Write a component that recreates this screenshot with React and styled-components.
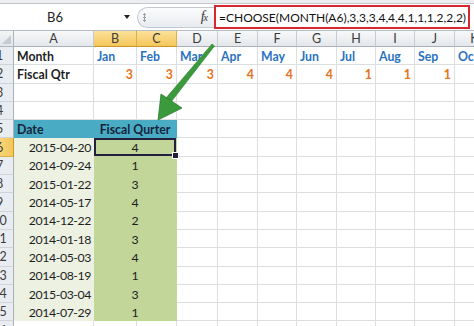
import React from 'react'
import styled, { createGlobalStyle } from 'styled-components'

const GlobalStyle = createGlobalStyle`
  body {
    margin: 0;
    background: #fff;
    font-family: Lato, "Liberation Sans", sans-serif;
    overflow: hidden;
  }
`

const COLS = [28, 80, 43, 40, 41, 40, 39, 40, 39, 39, 40, 40]
const LETTERS = ['A', 'B', 'C', 'D', 'E', 'F', 'G', 'H', 'I', 'J', 'K']
const MONTHS = ['Jan', 'Feb', 'Mar', 'Apr', 'May', 'Jun', 'Jul', 'Aug', 'Sep', 'Oct']
const QTRS = [3, 3, 3, 4, 4, 4, 1, 1, 1]
const DATA = [
  ['2015-04-20', 4],
  ['2014-09-24', 1],
  ['2015-01-22', 3],
  ['2014-05-17', 4],
  ['2014-12-22', 2],
  ['2014-01-18', 3],
  ['2014-05-03', 4],
  ['2014-08-19', 1],
  ['2015-03-04', 3],
  ['2014-07-29', 1],
]

const Page = styled.div`
  position: relative;
  width: 474px;
  height: 326px;
  overflow: hidden;
  background: #fff;
`

const TopStrip = styled.div`
  height: 3px;
  background: #eceef1;
  border-bottom: 1px solid #c3c7cd;
`

const FormulaRow = styled.div`
  height: 26px;
  display: flex;
  align-items: center;
  background: #fff;
`

const NameBox = styled.div`
  width: 134px;
  display: flex;
  align-items: center;
  font-size: 13px;
  color: #222;
`

const NameText = styled.span`
  width: 110px;
  text-align: center;
`

const Caret = styled.span`
  margin-left: 14px;
  width: 0;
  height: 0;
  border-left: 3.5px solid transparent;
  border-right: 3.5px solid transparent;
  border-top: 4px solid #222;
`

const FxArea = styled.div`
  margin-left: 3px;
  width: 77px;
  height: 21px;
  box-sizing: border-box;
  display: flex;
  align-items: center;
  border: 1px solid #c4c9d0;
  border-right: none;
  border-radius: 11px 0 0 11px;
  background: linear-gradient(#fbfcfd, #e8ebef);
`

const Grip = styled.span`
  margin-left: 5px;
  width: 3px;
  height: 9px;
  background: radial-gradient(circle, #9aa1ab 1px, transparent 1.2px) 0 0 / 3px 3px;
`

const Fx = styled.span`
  margin-left: auto;
  margin-right: 7px;
  font-family: "Liberation Serif", serif;
  font-style: italic;
  font-size: 14px;
  color: #333;
  letter-spacing: -1px;
  small {
    font-size: 10px;
  }
`

const FormulaBox = styled.div`
  flex: 1;
  margin-right: 4px;
  height: 24px;
  box-sizing: border-box;
  border: 2px solid #d8262e;
  padding-left: 3px;
  display: flex;
  align-items: center;
  font-size: 12px;
  color: #111;
  white-space: nowrap;
  overflow: hidden;
`

const Sheet = styled.div`
  display: grid;
  grid-template-columns: ${(p) => p.$cols.map((c) => c + 'px').join(' ')};
  grid-template-rows: 17px repeat(16, 18.3px);
  margin-left: -14px;
  font-size: 12.3px;
`

const Corner = styled.div`
  box-sizing: border-box;
  background: linear-gradient(#f3f4f6, #e3e6ea);
  border-top: 1px solid #b8bec6;
  border-right: 1px solid #aeb4bc;
  border-bottom: 1px solid #aeb4bc;
  position: relative;
  &::after {
    content: '';
    position: absolute;
    right: 2px;
    bottom: 2px;
    border-left: 9px solid transparent;
    border-bottom: 9px solid #c5cad1;
  }
`

const ColHead = styled.div`
  box-sizing: border-box;
  display: flex;
  align-items: center;
  justify-content: center;
  color: #3c3c3c;
  font-size: 12.5px;
  border-top: 1px solid #b8bec6;
  border-right: 1px solid ${(p) => (p.$active ? '#d9b04c' : '#c6cbd2')};
  border-bottom: 1px solid ${(p) => (p.$active ? '#c9962c' : '#a9b0b9')};
  background: ${(p) =>
    p.$active ? 'linear-gradient(#fbe19a, #f5c75a)' : 'linear-gradient(#f7f8f9, #e4e7eb)'};
`

const RowHead = styled.div`
  box-sizing: border-box;
  display: flex;
  align-items: center;
  justify-content: center;
  color: #3c3c3c;
  font-size: 12.5px;
  border-right: 1px solid ${(p) => (p.$active ? '#c9962c' : '#a9b0b9')};
  border-bottom: 1px solid ${(p) => (p.$active ? '#d9b04c' : '#cfd4da')};
  background: ${(p) => (p.$active ? 'linear-gradient(90deg, #fbe19a, #f5c75a)' : '#e9ecf0')};
`

const Cell = styled.div`
  position: relative;
  box-sizing: border-box;
  display: flex;
  align-items: center;
  padding: 1px 3px 0;
  grid-column: span ${(p) => p.$span || 1};
  justify-content: ${(p) =>
    p.$align === 'right' ? 'flex-end' : p.$align === 'center' ? 'center' : 'flex-start'};
  font-weight: ${(p) => (p.$bold ? 700 : 400)};
  color: ${(p) => p.$tone || '#1f1f1f'};
  background: ${(p) => p.$fill || '#fff'};
  border-right: 1px solid ${(p) => p.$fill || '#dcdfe2'};
  border-bottom: 1px solid ${(p) => p.$fill || '#dcdfe2'};
  box-shadow: ${(p) => (p.$selected ? 'inset 0 0 0 2px #22203c' : 'none')};
  white-space: nowrap;
`

const DateCell = styled(Cell)`
  letter-spacing: -0.4px;
  padding-right: 2px;
`

const Handle = styled.span`
  position: absolute;
  right: -3px;
  bottom: -3px;
  width: 5px;
  height: 5px;
  background: #22203c;
  border: 1px solid #fff;
  z-index: 2;
`

const ArrowLayer = styled.svg`
  position: absolute;
  left: 0;
  top: 0;
  pointer-events: none;
`

const BLUE = '#2b72c0'
const ORANGE = '#e6731b'
const TEAL = '#4aabc5'
const PALE = '#ecf1e2'
const GREEN = '#c3d69a'

export default function App() {
  const rows = []

  // row 1
  rows.push(
    <React.Fragment key="r1">
      <RowHead>1</RowHead>
      <Cell $bold>Month</Cell>
      {MONTHS.map((m) => (
        <Cell key={m} $bold $tone={BLUE}>
          {m}
        </Cell>
      ))}
    </React.Fragment>
  )

  // row 2
  rows.push(
    <React.Fragment key="r2">
      <RowHead>2</RowHead>
      <Cell $bold>Fiscal Qtr</Cell>
      {LETTERS.slice(1).map((l, i) => (
        <Cell key={l} $bold $align="right" $tone={ORANGE}>
          {QTRS[i] ?? ''}
        </Cell>
      ))}
    </React.Fragment>
  )

  // rows 3, 4 empty
  ;[3, 4].forEach((n) => {
    rows.push(
      <React.Fragment key={'r' + n}>
        <RowHead>{n}</RowHead>
        {LETTERS.map((l) => (
          <Cell key={l} />
        ))}
      </React.Fragment>
    )
  })

  // row 5 table header
  rows.push(
    <React.Fragment key="r5">
      <RowHead>5</RowHead>
      <Cell $bold $fill={TEAL} $tone="#15243a">Date</Cell>
      <Cell $bold $fill={TEAL} $tone="#15243a" $span={2} $align="center">
        Fiscal Qurter
      </Cell>
      {LETTERS.slice(3).map((l) => (
        <Cell key={l} />
      ))}
    </React.Fragment>
  )

  DATA.forEach(([date, q], i) => {
    const n = i + 6
    rows.push(
      <React.Fragment key={'r' + n}>
        <RowHead $active={n === 6}>{n}</RowHead>
        <DateCell $fill={PALE} $align="right">{date}</DateCell>
        <Cell $fill={GREEN} $span={2} $align="center" $selected={n === 6}>
          {q}
          {n === 6 && <Handle />}
        </Cell>
        {LETTERS.slice(3).map((l) => (
          <Cell key={l} />
        ))}
      </React.Fragment>
    )
  })

  rows.push(
    <React.Fragment key="r16">
      <RowHead>16</RowHead>
      {LETTERS.map((l) => (
        <Cell key={l} />
      ))}
    </React.Fragment>
  )

  return (
    <>
      <GlobalStyle />
      <Page>
        <TopStrip />
        <FormulaRow>
          <NameBox>
            <NameText>B6</NameText>
            <Caret />
          </NameBox>
          <FxArea>
            <Grip />
            <Fx>
              f<small>x</small>
            </Fx>
          </FxArea>
          <FormulaBox>=CHOOSE(MONTH(A6),3,3,3,4,4,4,1,1,1,2,2,2)</FormulaBox>
        </FormulaRow>
        <Sheet $cols={COLS}>
          <Corner />
          {LETTERS.map((l) => (
            <ColHead key={l} $active={l === 'B' || l === 'C'}>
              {l}
            </ColHead>
          ))}
          {rows}
        </Sheet>
        <ArrowLayer width="474" height="326" viewBox="0 0 474 326">
          <polygon points="212,44 214.5,46 171,102 166,98" fill="#3a9a3c" stroke="#2c7d30" strokeWidth="0.6" />
          <polygon points="158,120 161,94 182,108" fill="#3a9a3c" stroke="#2c7d30" strokeWidth="0.8" />
        </ArrowLayer>
      </Page>
    </>
  )
}
